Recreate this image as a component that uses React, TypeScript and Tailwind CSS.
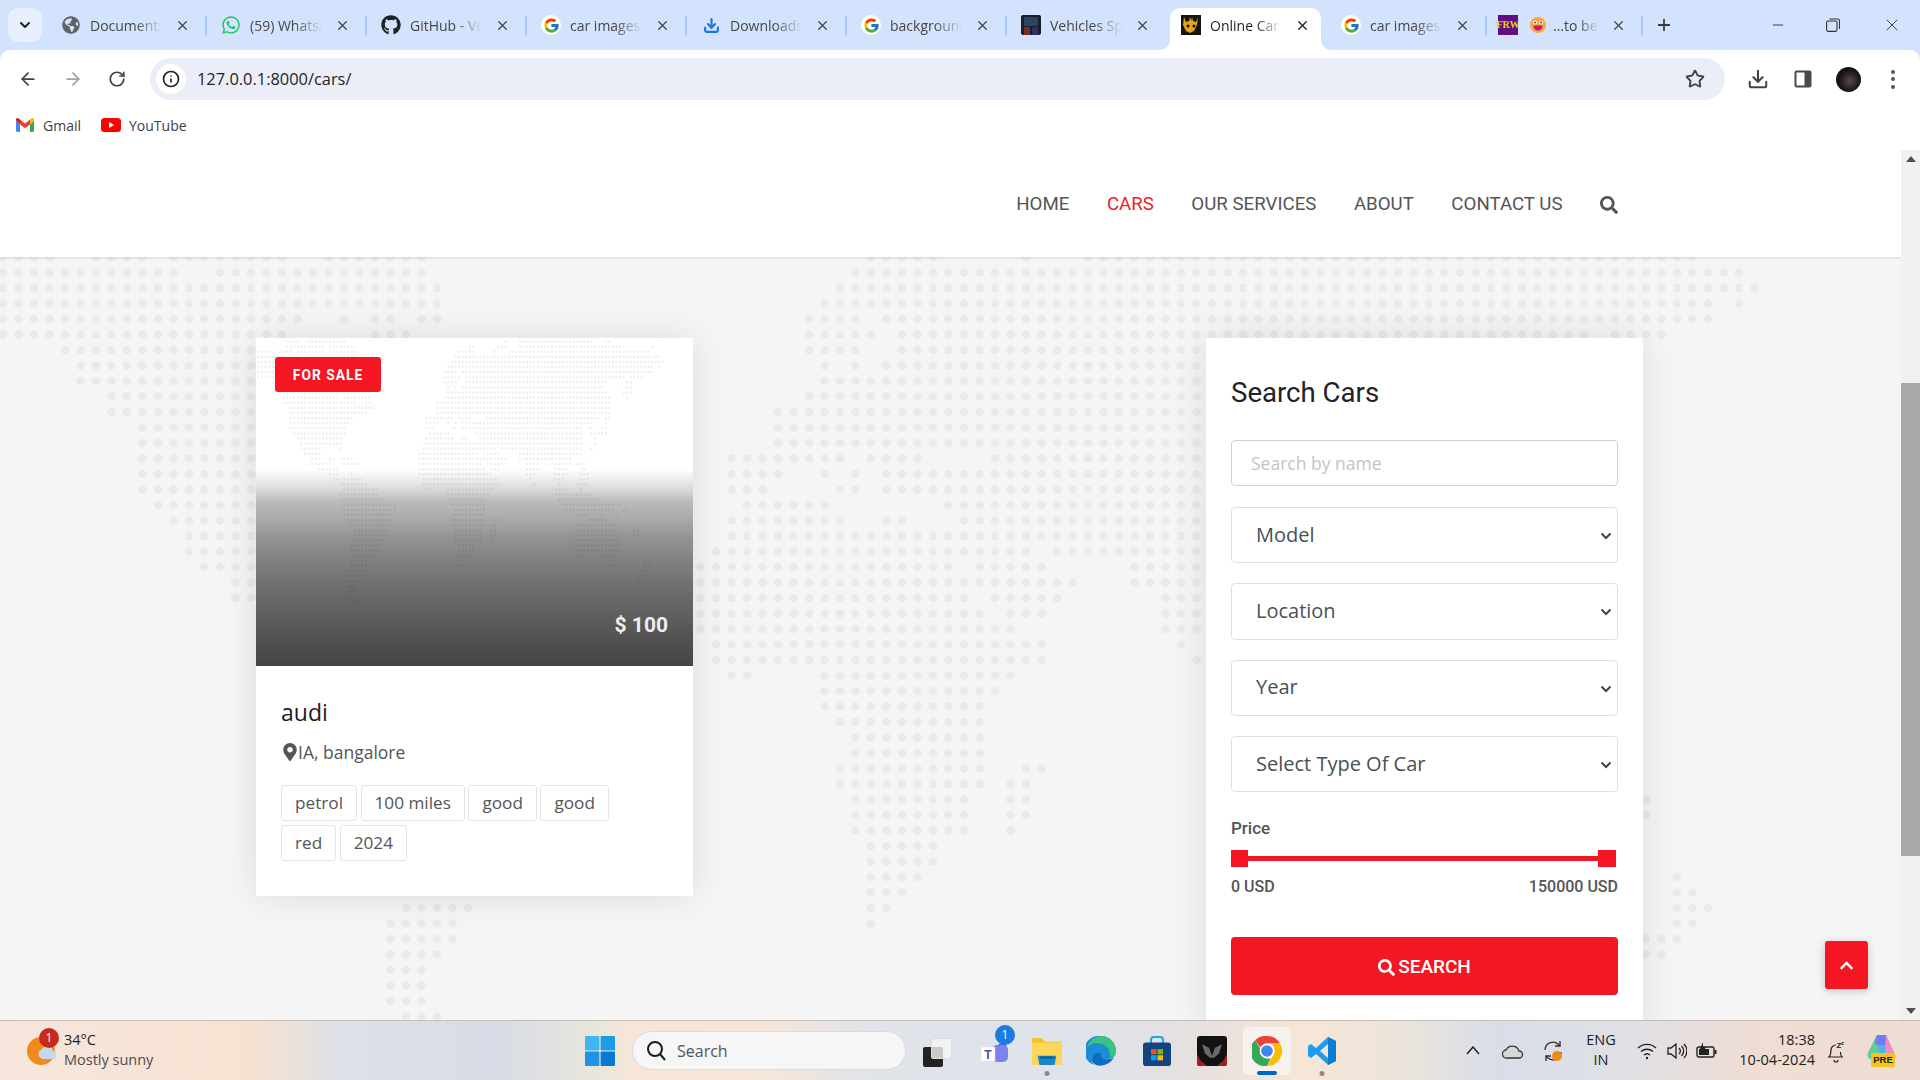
import React from "react";
import { X, Plus, ArrowLeft, ArrowRight, RotateCw, Star, Download, ChevronDown, Info, Minus } from "lucide-react";
import { FaWhatsapp, FaGithub, FaGlobeAmericas, FaSearch, FaMapMarkerAlt, FaChevronUp } from "react-icons/fa";
import { FcGoogle } from "react-icons/fc";

const MAP: [number, string][] = [
  [-3, "70 98"], [-2, "8-11 14-24 69 73-93 97-98"], [-1, "8-16 17-18 20-26 59-60 67-69 73-101 110"],
  [0, "0-3 6-9 11-18 21-27 56-60 66 70-109"], [1, "0-11 14-27 55-112"], [2, "0-28 54-113"], [3, "0-28 53-110 112"],
  [4, "0-19 22 24-25 27-28 52-55 57-110"], [5, "0-18 24-26 52-56 58-102 104-107"], [6, "4-30 52-55 58-97 103-104"],
  [7, "5-30 53 55 57-96 103-104"], [8, "5-31 53-97 102-104"], [9, "7-22 24-31 52-98 103"], [10, "7-27 30-31 50-98"],
  [11, "9-32 50-98"], [12, "9-30 50-98"], [13, "9-26 47-54 56-59 64-95 97-98"], [14, "9-25 47-50 53 55 57-93 97"],
  [15, "9-24 47-49 54-55 57-90 92-93 96-97"], [16, "10-24 48-53 61-90 93-97"], [17, "11-23 47-54 57-58 62-90 94"],
  [18, "12-23 47-90 94"], [19, "12-17 23 46-66 68-90 93"], [20, "13-17 45-61 63-67 73-90"],
  [21, "15-17 20-21 23-26 45-69 73-87"], [22, "15-20 24-28 45-62 64-68 75-78 82-87 89-91"],
  [23, "17-22 45-63 65-67 75-78 83-86 90-91"], [24, "20-22 26 45-65 75-77 83-86 90-92"],
  [25, "21-29 46-67 76 83-85 90-92"], [26, "23-30 46-67 77 84 89-92"], [27, "24-33 47-48 53-65 82-86 90"],
  [28, "23-33 53-64 83-93"], [29, "23-35 53-63 84-95"], [30, "23-38 54-63 85-101"], [31, "24-38 55-63 86-99 102-103"],
  [32, "24-37 55-63 89-92 96 100"], [33, "25-37 54-63 66-67 92-97"], [34, "26-37 54-63 65-66 89-99"],
  [35, "27-36 55-62 65-66 89-99 105-106"], [36, "27-36 55-62 65-66 88-101 105-106"], [37, "27-35 55-62 65 88-101"],
  [38, "26-34 56-60 88-101"], [39, "26-34 56-60 89-101"], [40, "26-32 56-59 89-91 95-100 108"],
  [41, "26-31 56-58 97-100 108-109"], [42, "26-30 56-57 98-99 108-110"], [43, "25-29 56 99 108-109"],
  [44, "25-29 106-108"], [45, "25-28 106-107"], [46, "25-27"], [47, "25-27"], [48, "25-27"], [49, "26-28"], [50, "28"],
];

function cells(): [number, number][] {
  const out: [number, number][] = [];
  for (const [k, s] of MAP) {
    for (const p of s.split(" ")) {
      const [a, b] = p.split("-").map(Number);
      for (let c = a; c <= (b ?? a); c++) out.push([c, k]);
    }
  }
  return out;
}
const CELLS = cells();
const bigPath = CELLS.filter(([, k]) => k >= 0).map(([c, k]) => `M${(3 + 15.5 * c).toFixed(1)} ${(15.5 * k).toFixed(1)}h0.01`).join("");
const tinyPath = CELLS.map(([c, k]) => `M${(1.5 + 3.58 * c).toFixed(2)} ${(12.67 + 5.1 * k).toFixed(2)}h2v2.2h-2z`).join("");

function G() {
  return <span className="flex h-[20px] w-[20px] items-center justify-center rounded-full bg-white"><FcGoogle size={17} /></span>;
}
function DarkFav() {
  return (
    <svg width="20" height="20" viewBox="0 0 20 20"><rect width="20" height="20" rx="2" fill="#1b1d2a" /><rect x="3" y="2" width="14" height="9" rx="1" fill="#26485a" /><path d="M3 12h6v8H3z" fill="#7b2a2a" /><path d="M11 12h6v8h-6z" fill="#2b2f6a" /></svg>
  );
}
function CarFav() {
  return (
    <svg width="20" height="20" viewBox="0 0 20 20"><rect width="20" height="20" fill="#15140f" /><path d="M3 2l2 5 3-1 1-4 1 4 1-4 1 4 3 1 2-5-1 8-3 6-4 2-4-2-3-6z" fill="#e5a118" /><circle cx="7" cy="11" r="1.5" fill="#15140f" /><circle cx="13" cy="11" r="1.5" fill="#15140f" /></svg>
  );
}
function FrwFav() {
  return <span className="flex h-[20px] w-[20px] items-center justify-center bg-[#5f0f80] text-[10px] font-bold leading-none text-[#eecb10] font-['Liberation_Serif',serif]">FRW</span>;
}
function Emoji() {
  return (
    <svg width="16" height="16" viewBox="0 0 16 16"><circle cx="8" cy="8" r="8" fill="#f9a63a" /><circle cx="5" cy="5.5" r="2" fill="#fff" /><circle cx="11" cy="5.5" r="2" fill="#fff" /><circle cx="5" cy="5.5" r="0.9" fill="#333" /><circle cx="11" cy="5.5" r="0.9" fill="#333" /><path d="M3.5 8.5h9c0 3-2 5-4.5 5s-4.5-2-4.5-5z" fill="#c2187e" /></svg>
  );
}

function Tab({ icon, title, active, textW = 72, sep = true }: { icon: React.ReactNode; title: string; active?: boolean; textW?: number; sep?: boolean }) {
  return (
    <div className="relative flex h-[50px] w-[160px] shrink-0 items-center pl-[15px]">
      {active && (
        <>
          <span className="absolute bottom-0 left-[4px] right-[5px] top-[8px] rounded-t-[10px] bg-white" />
          <span className="absolute bottom-0 left-[-6px] h-[10px] w-[10px] bg-[radial-gradient(circle_at_0_0,transparent_9.5px,white_10px)]" />
          <span className="absolute bottom-0 right-[-5px] h-[10px] w-[10px] bg-[radial-gradient(circle_at_100%_0,transparent_9.5px,white_10px)]" />
        </>
      )}
      <span className="relative flex w-[20px] shrink-0 items-center justify-center">{icon}</span>
      <span
        style={{ width: textW }}
        className={`relative ml-[9px] overflow-hidden whitespace-nowrap pt-[1px] text-[14px] leading-[20px] [mask-image:linear-gradient(to_right,black_62%,transparent)] ${active ? "text-[#1f1f1f]" : "text-[#454746]"}`}
      >
        {title}
      </span>
      <X size={15} strokeWidth={2.2} className={`absolute left-[129px] ${active ? "text-[#222]" : "text-[#4a4a4a]"}`} />
      {sep && <span className="absolute right-[-1px] top-[16px] h-[20px] w-[2px] rounded bg-[#a9c7fa]" />}
    </div>
  );
}

function TabStrip() {
  return (
    <div className="flex h-[50px] shrink-0 items-center bg-[#d3e3fd]">
      <div className="ml-[8px] mr-[4px] flex h-[34px] w-[34px] items-center justify-center rounded-[10px] bg-[#e9f0fd]">
        <ChevronDown size={16} strokeWidth={3} className="text-[#222]" />
      </div>
      <Tab icon={<FaGlobeAmericas size={18} className="text-[#5f6368]" />} title="Documents" />
      <Tab icon={<FaWhatsapp size={20} className="text-[#25c35a]" />} title="(59) WhatsApp" />
      <Tab icon={<FaGithub size={20} className="text-[#1f2328]" />} title="GitHub - Vehicles" />
      <Tab icon={<G />} title="car images" />
      <Tab icon={<Download size={17} strokeWidth={3} className="text-[#1a73e8]" />} title="Downloads" />
      <Tab icon={<G />} title="background" />
      <Tab icon={<DarkFav />} title="Vehicles Specs" sep={false} />
      <Tab active icon={<CarFav />} title="Online Car Rental" sep={false} />
      <Tab icon={<G />} title="car images" />
      <div className="relative flex h-[50px] w-[156px] shrink-0 items-center pl-[12px]">
        <FrwFav />
        <span className="ml-[12px]"><Emoji /></span>
        <span className="ml-[7px] w-[46px] overflow-hidden whitespace-nowrap pt-[1px] text-[14px] leading-[20px] text-[#454746] [mask-image:linear-gradient(to_right,black_55%,transparent)]">...to be continued</span>
        <X size={15} strokeWidth={2.2} className="absolute left-[125px] text-[#4a4a4a]" />
        <span className="absolute right-[-1px] top-[16px] h-[20px] w-[2px] rounded bg-[#a9c7fa]" />
      </div>
      <Plus size={18} strokeWidth={2.4} className="ml-[13px] text-[#3c3c3c]" />
      <div className="ml-auto flex items-center text-[#333]">
        <Minus size={16} strokeWidth={1.4} className="mr-[40px]" />
        <svg width="14" height="14" viewBox="0 0 14 14" fill="none" stroke="#333" strokeWidth="1.1" className="mr-[42px]"><rect x="0.6" y="3" width="10.4" height="10.4" rx="1.6" /><path d="M3.5 1h8a2 2 0 0 1 2 2v8" /></svg>
        <X size={20} strokeWidth={1.1} className="mr-[18px]" />
      </div>
    </div>
  );
}

function Toolbar() {
  return (
    <div className="flex h-[50px] shrink-0 items-end bg-[#d3e3fd]">
      <div className="flex h-[50px] w-full rounded-t-[10px] bg-white pt-[8px]">
        <div className="flex h-[42px] w-[150px] shrink-0 items-center pl-[18px] text-[#444]">
          <ArrowLeft size={20} strokeWidth={2.1} />
          <ArrowRight size={20} strokeWidth={2.1} className="ml-[25px] text-[#a3a3a3]" />
          <RotateCw size={18} strokeWidth={2.3} className="ml-[25px]" />
        </div>
        <div className="flex h-[42px] w-[1575px] items-center rounded-full bg-[#ebeef7] pl-[6px] pr-[20px]">
          <span className="flex h-[30px] w-[30px] items-center justify-center rounded-full bg-white"><Info size={18} strokeWidth={2.2} className="text-[#222]" /></span>
          <span className="ml-[11px] pt-[1px] text-[16.4px] text-[#1f1f1f]">127.0.0.1:8000/cars/</span>
          <Star size={20} strokeWidth={2.3} className="ml-auto text-[#444]" />
        </div>
        <div className="flex h-[42px] flex-1 items-center text-[#444]">
          <Download size={22} strokeWidth={2.2} className="ml-[22px]" />
          <svg width="18" height="18" viewBox="0 0 18 18" className="ml-[25px]"><rect x="0.5" y="0.5" width="17" height="17" rx="2" fill="#4a4a4a" /><rect x="2.5" y="2.5" width="8" height="13" fill="#fff" /></svg>
          <span className="ml-[24px] h-[25px] w-[25px] rounded-full bg-[radial-gradient(circle_at_55%_55%,#5a4a46,#141414_55%)]" />
          <span className="ml-[30px] flex flex-col gap-[3.5px]">
            <i className="h-[4px] w-[4px] rounded-full bg-[#555]" /><i className="h-[4px] w-[4px] rounded-full bg-[#555]" /><i className="h-[4px] w-[4px] rounded-full bg-[#555]" />
          </span>
        </div>
      </div>
    </div>
  );
}

function Bookmarks() {
  return (
    <div className="flex h-[50px] shrink-0 items-center bg-white pl-[16px] text-[14px] text-[#3c4043]">
      <svg width="18" height="14" viewBox="0 0 18 14"><path d="M0 2.5V12.6A1.4 1.4 0 0 0 1.4 14H4V6.5z" fill="#4285f4" /><path d="M14 6.5V14h2.6a1.4 1.4 0 0 0 1.4-1.4V2.5z" fill="#34a853" /><path d="M0 2.5l4 4V1.6L2.4.3A1.5 1.5 0 0 0 0 1.6z" fill="#c5221f" /><path d="M4 1.6v4.9l5 3.7 5-3.7V1.6L9 5.4z" fill="#ea4335" /><path d="M14 1.6v4.9l4-4V1.6A1.5 1.5 0 0 0 15.6.3z" fill="#fbbc04" /></svg>
      <span className="ml-[9px]">Gmail</span>
      <svg width="20" height="14" viewBox="0 0 20 14" className="ml-[20px]"><rect width="20" height="14" rx="3.5" fill="#f00" /><path d="M8 4l5 3-5 3z" fill="#fff" /></svg>
      <span className="ml-[8px]">YouTube</span>
    </div>
  );
}

function Nav() {
  const items = ["HOME", "CARS", "OUR SERVICES", "ABOUT", "CONTACT US"];
  return (
    <div className="relative z-10 flex h-[107px] shrink-0 items-center justify-end gap-[37.5px] bg-white pr-[283px] pt-[2px] shadow-[0_1px_3px_rgba(0,0,0,0.12)] font-['Roboto',sans-serif] text-[18.7px] text-[#555]">
      {items.map((t) => (
        <span key={t} className={t === "CARS" ? "text-[#e9202c]" : ""}>{t}</span>
      ))}
      <FaSearch size={18} className="text-[#555]" />
    </div>
  );
}

function CarCard() {
  const tags = ["petrol", "100 miles", "good", "good", "red", "2024"];
  return (
    <div className="w-[437px] shrink-0 self-start bg-white shadow-[0_0_35px_rgba(0,0,0,0.1)]">
      <div className="relative h-[328px] overflow-hidden bg-white">
        <svg width="437" height="328" viewBox="0 0 437 328" className="absolute inset-0"><path d={tinyPath} fill="#eeeeee" /></svg>
        <div className="absolute inset-0 bg-[linear-gradient(to_bottom,transparent_40%,rgba(0,0,0,0.13)_45.5%,rgba(0,0,0,0.27)_50%,rgba(0,0,0,0.34)_55.5%,rgba(0,0,0,0.42)_60.6%,rgba(0,0,0,0.475)_65.6%,rgba(0,0,0,0.57)_76%,rgba(0,0,0,0.64)_86%,rgba(0,0,0,0.71)_96%,rgba(0,0,0,0.735)_100%)]" />
        <span className="absolute left-[19px] top-[19px] flex h-[35px] w-[106px] items-center justify-center rounded-[3px] bg-[#f41622] pt-[2px] font-['Roboto',sans-serif] text-[13.8px] font-bold tracking-[1px] text-white">FOR SALE</span>
        <span className="absolute bottom-[28px] right-[25px] font-['Roboto',sans-serif] text-[21px] font-bold leading-[26px] text-[#eee]">$ 100</span>
      </div>
      <div className="px-[25px] pt-[31px]">
        <div className="text-[23px] leading-[30px] text-[#1c1c1c]">audi</div>
        <div className="mt-[13px] flex h-[24px] items-center text-[17.5px] text-[#555]">
          <FaMapMarkerAlt size={18} className="mr-[-1px] text-[#555]" />
          IA, bangalore
        </div>
        <div className="mt-[21px] flex w-[370px] flex-wrap gap-x-[3.5px] gap-y-[4.5px] pb-[35.5px]">
          {tags.map((t, i) => (
            <span key={i} className="flex h-[35.5px] items-center rounded-[3px] border border-[#e4e4e4] px-[13px] text-[17.2px] text-[#555]">{t}</span>
          ))}
        </div>
      </div>
    </div>
  );
}

function SearchPanel() {
  const selects = ["Model", "Location", "Year", "Select Type Of Car"];
  return (
    <div className="w-[437px] shrink-0 bg-white px-[25px] pb-[40px] pt-[39px] shadow-[0_0_35px_rgba(0,0,0,0.1)]">
      <h2 className="font-['Roboto',sans-serif] text-[27.6px] leading-[32px] text-[#222]">Search Cars</h2>
      <input
        placeholder="Search by name"
        className="mt-[31px] block h-[46px] w-[387px] rounded-[4px] border border-[#ced0d6] px-[19px] text-[17.5px] outline-none placeholder:text-[#c4c4c4]"
      />
      <div className="mt-[21px] flex w-[387px] flex-col gap-[20px]">
        {selects.map((s) => (
          <div key={s} className="relative h-[56.3px]">
            <select defaultValue={s} className="h-full w-full appearance-none rounded-[4px] border border-[#e0e0e0] bg-white pb-[1px] pl-[24px] text-[20px] text-[#495057] outline-none">
              <option>{s}</option>
            </select>
            <svg width="12" height="8" viewBox="0 0 12 8" fill="none" stroke="#444" strokeWidth="2" className="absolute right-[6px] top-[25px]"><path d="M1.5 1.5L6 6l4.5-4.5" /></svg>
          </div>
        ))}
      </div>
      <div className="mt-[26px] font-['Roboto',sans-serif] text-[17px] font-medium leading-[20px] text-[#555]">Price</div>
      <div className="relative mt-[12px] h-[17px] w-[385px]">
        <div className="absolute left-0 right-0 top-[6px] h-[5px] bg-[#f41622]" />
        <span className="absolute left-0 top-0 h-[17px] w-[17px] bg-[#f41622]" />
        <span className="absolute right-0 top-0 h-[17px] w-[18px] bg-[#f41622]" />
      </div>
      <div className="mt-[10px] flex w-[387px] justify-between font-['Roboto',sans-serif] text-[16px] font-medium leading-[20px] text-[#555]">
        <span>0 USD</span><span>150000 USD</span>
      </div>
      <button className="mt-[40px] flex h-[58px] w-[387px] items-center justify-center gap-[3px] rounded-[4px] bg-[#f41622] pt-[2px] font-['Roboto',sans-serif] text-[19px] font-medium text-white">
        <FaSearch size={17} /> SEARCH
      </button>
    </div>
  );
}

function Page() {
  return (
    <div className="relative flex min-w-0 flex-1 flex-col overflow-hidden bg-[#f5f5f5]">
      <Nav />
      <div className="relative flex flex-1 justify-between pl-[256px] pr-[258px] pt-[81px]">
        <svg width="1901" height="763" viewBox="0 0 1901 763" className="absolute left-0 top-0">
          <path d={bigPath} stroke="#e9eaec" strokeWidth="8.6" strokeLinecap="round" fill="none" />
        </svg>
        <div className="relative"><CarCard /></div>
        <div className="relative"><SearchPanel /></div>
      </div>
      <button className="absolute left-[1825px] top-[791px] flex h-[48px] w-[43px] items-center justify-center rounded-[3px] bg-[#f41622] shadow-[0_2px_10px_rgba(0,0,0,0.2)]">
        <FaChevronUp size={15} className="text-white" />
      </button>
    </div>
  );
}

function Scrollbar() {
  return (
    <div className="flex w-[19px] shrink-0 flex-col items-center bg-[#f1f1f1]">
      <div className="flex h-[18px] w-full items-center justify-center">
        <span className="h-0 w-0 border-x-[5px] border-b-[6px] border-x-transparent border-b-[#505050]" />
      </div>
      <div className="mt-[215px] h-[473px] w-full bg-[#a8a8a8]" />
      <div className="mt-auto flex h-[18px] w-full items-center justify-center">
        <span className="h-0 w-0 border-x-[5px] border-t-[6px] border-x-transparent border-t-[#505050]" />
      </div>
    </div>
  );
}

function TaskIcon({ children, w = 55, dot, active }: { children: React.ReactNode; w?: number; dot?: boolean; active?: boolean }) {
  return (
    <div className={`relative flex h-[48px] items-center justify-center rounded-[5px] ${active ? "ml-[3px] bg-[#f8f2ee]" : ""}`} style={{ width: w }}>
      {children}
      {dot && <span className="absolute bottom-[-1px] left-1/2 h-[5px] w-[5px] -translate-x-1/2 rounded-full bg-[#8a8a8a]" />}
      {active && <span className="absolute bottom-0 left-1/2 h-[4px] w-[20px] -translate-x-1/2 rounded-full bg-[#0067c0]" />}
    </div>
  );
}

function SearchGlyph() {
  return (
    <svg width="20" height="22" viewBox="0 0 20 22" fill="none" stroke="#1c1c1c" strokeWidth="2"><circle cx="9" cy="9" r="7" /><path d="M14 14l5 6" /></svg>
  );
}

function Taskbar() {
  return (
    <div className="flex h-[60px] shrink-0 items-center border-t border-[#c4bdb8] bg-[linear-gradient(90deg,#f6e6dc_0%,#f6e2d2_13%,#dde0e8_18%,#d8dce6_26%,#e8e6dc_31%,#f7e6d8_33%,#f5e6da_40%,#e2e4e8_45%,#dfe3ea_50%,#dfe3ea_57%,#e6e0e0_62%,#f7e6d6_68%,#e8e3dd_74%,#d9dde8_78%,#dfe0e6_84%,#f0ddd3_92%,#eeddd3_100%)] text-[#222]">
      <div className="relative ml-[27px] flex w-[558px] shrink-0 items-center">
        <svg width="30" height="34" viewBox="0 0 30 34" className="shrink-0"><circle cx="14" cy="17" r="14" fill="#f08a1d" /><path d="M9 3a14 14 0 0 0 0 28 14 14 0 0 1 0-28z" fill="#f6b64a" /><path d="M14 24a5 5 0 0 1 1-9 6 6 0 0 1 11 2 4 4 0 0 1-1 8H15z" fill="#c8d8ea" /></svg>
        <span className="absolute left-[12px] top-[-2px] flex h-[20px] w-[20px] items-center justify-center rounded-full bg-[#c42b1c] text-[12px] text-white">1</span>
        <div className="mb-[2px] ml-[7px] flex flex-col text-[14.5px] leading-[20px]">
          <span className="text-[#1c1c1c]">34°C</span>
          <span className="text-[#4d4d4d]">Mostly sunny</span>
        </div>
      </div>
      <svg width="30" height="30" viewBox="0 0 30 30" className="shrink-0">
        <rect x="0" y="0" width="14.4" height="14.4" rx="1" fill="#3fb6f0" /><rect x="15.6" y="0" width="14.4" height="14.4" rx="1" fill="#1c9bea" />
        <rect x="0" y="15.6" width="14.4" height="14.4" rx="1" fill="#1c93e3" /><rect x="15.6" y="15.6" width="14.4" height="14.4" rx="1" fill="#0878d4" />
      </svg>
      <div className="ml-[17px] flex h-[39px] w-[274px] shrink-0 items-center rounded-full border border-[#dcd9d6] bg-[#f7f6f6] pl-[13px] text-[16px] text-[#555]">
        <SearchGlyph />
        <span className="ml-[11px]">Search</span>
      </div>
      <div className="relative ml-[17px] h-[30px] w-[24px] shrink-0">
        <span className="absolute left-[0px] top-[11px] h-[20px] w-[20px] rounded-[2px] bg-[#222]" />
        <span className="absolute left-[8px] top-[2px] h-[21px] w-[21px] rounded-[2px] border border-[#ddd] bg-[#f5f5f5]/80" />
      </div>
      <div className="ml-[21px] flex items-center">
        <TaskIcon w={54}>
          <svg width="34" height="34" viewBox="0 0 34 34"><circle cx="24" cy="14" r="5" fill="#5b5fc7" /><rect x="14" y="11" width="16" height="17" rx="5" fill="#7b83eb" /><rect x="3" y="13" width="14" height="14" fill="#fff" stroke="#ddd" strokeWidth="0.5" /><text x="10" y="24.5" textAnchor="middle" fontSize="12" fontWeight="700" fill="#464eb8" fontFamily="Liberation Sans">T</text></svg>
          <span className="absolute right-[7px] top-[-2px] flex h-[20px] w-[20px] items-center justify-center rounded-full bg-[#1a7ce0] text-[12px] text-white">1</span>
        </TaskIcon>
        <TaskIcon w={50} dot>
          <svg width="30" height="28" viewBox="0 0 32 30" preserveAspectRatio="none"><path d="M0 3a2 2 0 0 1 2-2h8l4 4h16a2 2 0 0 1 2 2v21a2 2 0 0 1-2 2H2a2 2 0 0 1-2-2z" fill="#f6bf22" /><path d="M0 6h32v22a2 2 0 0 1-2 2H2a2 2 0 0 1-2-2z" fill="#fbd65a" /><path d="M6 20h20l-2 10H8z" fill="#1b86c8" /><rect x="9" y="21" width="14" height="2" fill="#0b5a90" /></svg>
        </TaskIcon>
        <TaskIcon w={58}>
          <svg width="30" height="30" viewBox="0 0 30 30"><path d="M15 0a15 15 0 0 1 15 15c0 6-5 8-9 8s-8-2-6-5c-5-1-9 2-9 6 0 2 1 4 2 5A15 15 0 0 1 15 0z" fill="#1a8dd6" /><path d="M15 0a15 15 0 0 1 15 15c0 4-3 6-6 6 1-8-5-14-14-14-4 0-7 2-9 5A15 15 0 0 1 15 0z" fill="#39c481" /><path d="M6 24c0-5 4-8 9-7-1 4 3 7 8 6 2 0 4-1 5-2a15 15 0 0 1-18 8c-2-1-4-3-4-5z" fill="#0c6cbd" /></svg>
        </TaskIcon>
        <TaskIcon w={54}>
          <svg width="30" height="30" viewBox="0 0 30 32" preserveAspectRatio="none"><path d="M9 8V4a3 3 0 0 1 3-3h6a3 3 0 0 1 3 3v4" fill="none" stroke="#1fa6e6" strokeWidth="2.2" /><rect x="1" y="7" width="28" height="25" rx="3" fill="#12457f" /><rect x="9" y="14" width="5.5" height="5.5" fill="#f25022" /><rect x="15.5" y="14" width="5.5" height="5.5" fill="#7fba00" /><rect x="9" y="20.5" width="5.5" height="5.5" fill="#00a4ef" /><rect x="15.5" y="20.5" width="5.5" height="5.5" fill="#ffb900" /></svg>
        </TaskIcon>
        <TaskIcon w={56}>
          <svg width="30" height="30" viewBox="0 0 30 36" preserveAspectRatio="none"><rect width="30" height="36" rx="3" fill="#121212" /><path d="M0 22l4 8 6 6H3a3 3 0 0 1-3-3z M30 22l-4 8-6 6h7a3 3 0 0 0 3-3z" fill="#a61c22" /><path d="M5 10l7 4 3 10 3-10 7-4-3 11-5 5h-4l-5-5z" fill="#6a6a6a" /></svg>
        </TaskIcon>
        <TaskIcon w={48} active>
          <svg width="30" height="30" viewBox="0 0 30 30"><path d="M15 0a15 15 0 0 1 13 7.5H15a7.5 7.5 0 0 0-6.6 4L3.2 3.9A15 15 0 0 1 15 0z" fill="#ea4335" /><path d="M28 7.5A15 15 0 0 1 15 30l6.5-11.2A7.5 7.5 0 0 0 21.5 11 7.5 7.5 0 0 0 20 7.5z" fill="#fbbc04" /><path d="M15 30A15 15 0 0 1 3.2 3.9l6.4 11.3a7.5 7.5 0 0 0 9 7.2z" fill="#34a853" /><circle cx="15" cy="15" r="7.4" fill="#fff" /><circle cx="15" cy="15" r="5.8" fill="#4285f4" /></svg>
        </TaskIcon>
        <TaskIcon w={62} dot>
          <svg width="30" height="30" viewBox="0 0 30 30"><path d="M21 1l8 4v20l-8 4-12-11-5 4-3-2V10l3-2 5 4zM21 8l-8 7 8 7z" fill="#1f9cf0" fillRule="evenodd" /><path d="M21 1l8 4v20l-8 4z" fill="#0a7fd0" /></svg>
        </TaskIcon>
      </div>
      <div className="ml-auto flex items-center">
        <svg width="14" height="9" viewBox="0 0 14 9" fill="none" stroke="#222" strokeWidth="1.5" className="mr-[22px]"><path d="M1 8l6-7 6 7" /></svg>
        <svg width="22" height="18" viewBox="0 0 22 18" className="mr-[17px]"><path d="M5 16a4 4 0 0 1-1-8 7 7 0 0 1 13 1 3.5 3.5 0 0 1 0 7z" fill="#d8d8d8" stroke="#333" strokeWidth="1.3" /></svg>
        <svg width="24" height="26" viewBox="0 0 24 26" fill="none" stroke="#333" strokeWidth="1.4" className="mr-[16px]"><path d="M4 12a8 8 0 0 1 13-6l2 2M20 14a8 8 0 0 1-13 6l-2-2" /><path d="M19 3v5h-5M5 23v-5h5" /><circle cx="16" cy="18" r="5" fill="#ef8a17" stroke="none" /></svg>
        <div className="mb-[2px] mr-[16px] flex w-[40px] flex-col items-center text-[14.5px] leading-[20px] text-[#222]">
          <span>ENG</span><span>IN</span>
        </div>
        <svg width="20" height="18" viewBox="0 0 20 18" fill="none" stroke="#222" strokeWidth="1.4" className="mr-[10px]"><path d="M1 6a13 13 0 0 1 18 0M4 9.5a9 9 0 0 1 12 0M7 13a4.5 4.5 0 0 1 6 0" /><circle cx="10" cy="16" r="1.2" fill="#222" stroke="none" /></svg>
        <svg width="20" height="18" viewBox="0 0 20 18" fill="none" stroke="#222" strokeWidth="1.3" className="mr-[9px]"><path d="M1 6v6h3l5 4V2L4 6z" /><path d="M12 6a4 4 0 0 1 0 6M14.5 4a7 7 0 0 1 0 10M17 2a10 10 0 0 1 0 14" /></svg>
        <svg width="22" height="18" viewBox="0 0 22 18" className="mr-[17px]"><rect x="1" y="5" width="17" height="10" rx="2" fill="none" stroke="#222" strokeWidth="1.4" /><rect x="3" y="7" width="10" height="6" fill="#222" /><rect x="18.5" y="8" width="2" height="4" fill="#222" /><path d="M7 0L4 7h3l-1 5 4-7H7z" fill="#222" /></svg>
        <div className="mb-[2px] flex w-[80px] flex-col items-end text-[14.5px] leading-[20px] text-[#222]">
          <span>18:38</span><span>10-04-2024</span>
        </div>
        <svg width="20" height="24" viewBox="0 0 20 24" fill="none" stroke="#222" strokeWidth="1.2" className="ml-[11px]"><path d="M3 18c2-2 2-4 2-7a5 5 0 0 1 5-5M16 18c-1-1-1.5-3-1.6-5M2 18h15M8 21a2 2 0 0 0 4 0" /><text x="10.5" y="9" fontSize="8" stroke="none" fill="#222" fontFamily="Liberation Sans" fontWeight="700">Z</text><text x="15" y="5.5" fontSize="6" stroke="none" fill="#222" fontFamily="Liberation Sans" fontWeight="700">z</text></svg>
        <div className="relative ml-[21px] mr-[23px] h-[36px] w-[30px]">
          <svg width="30" height="30" viewBox="0 0 30 30"><path d="M10 2h9l9 20c1 3-1 5-3 5h-5l-3-6h-6l-2 5H5c-3 0-5-3-4-6z" fill="#4fb1ea" /><path d="M10 2h9l3 10H8z" fill="#6e7ef0" /><path d="M1 21l6-13 5 8-3 10H5c-3 0-5-2-4-5z" fill="#5fd08c" /><path d="M19 2l9 20c1 3-1 5-3 5h-5l-2-8z" fill="#f08ac0" /></svg>
          <span className="absolute bottom-[2px] left-[4px] flex h-[14px] w-[24px] items-center justify-center rounded-[2px] bg-[#f2c61f] font-['Liberation_Sans',sans-serif] text-[9.5px] font-bold leading-none text-[#222]">PRE</span>
        </div>
      </div>
    </div>
  );
}

export default function App() {
  return (
    <div className="flex h-[1080px] w-[1920px] flex-col overflow-hidden bg-white font-['Open_Sans',sans-serif]">
      <TabStrip />
      <Toolbar />
      <Bookmarks />
      <div className="flex min-h-0 flex-1">
        <Page />
        <Scrollbar />
      </div>
      <Taskbar />
    </div>
  );
}
